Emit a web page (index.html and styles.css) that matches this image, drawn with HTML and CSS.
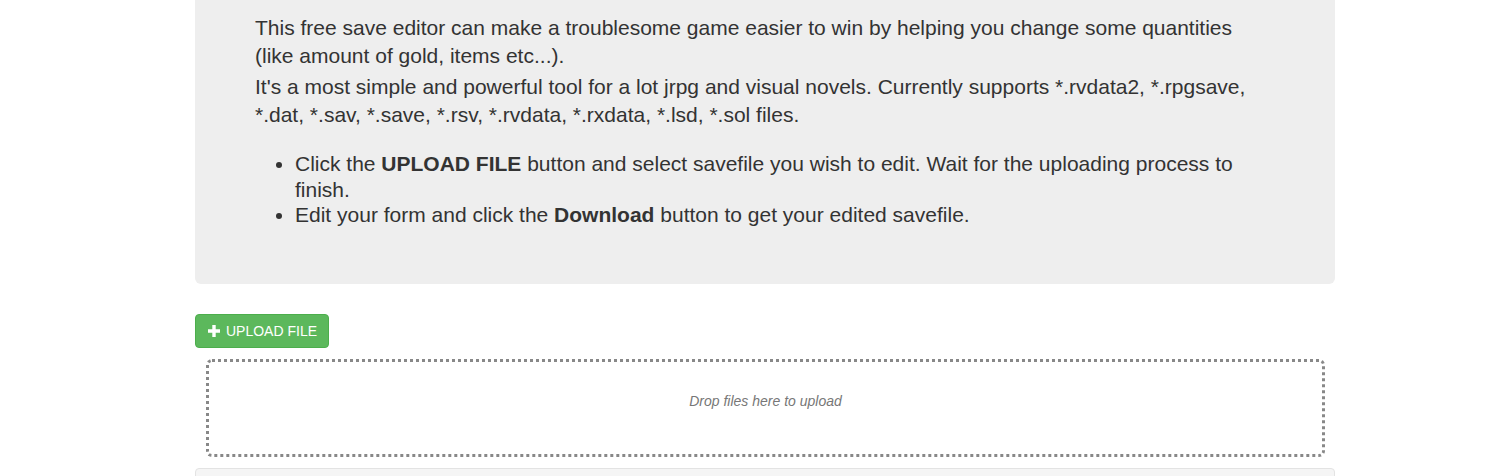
FILE: index.html
```html
<!DOCTYPE html>
<html>
<head>
<meta charset="utf-8">
<link rel="stylesheet" href="styles.css">
</head>
<body>
<div class="container">
  <div class="jumbotron">
    <p class="intro">This free save editor can make a troublesome game easier to win by helping you change some quantities (like amount of gold, items etc...).</p>
    <p class="intro">It's a most simple and powerful tool for a lot jrpg and visual novels. Currently supports *.rvdata2, *.rpgsave, *.dat, *.sav, *.save, *.rsv, *.rvdata, *.rxdata, *.lsd, *.sol files.</p>
    <ul class="steps">
      <li>Click the <b>UPLOAD FILE</b> button and select savefile you wish to edit. Wait for the uploading process to finish.</li>
      <li>Edit your form and click the <b>Download</b> button to get your edited savefile.</li>
    </ul>
  </div>
  <button class="btn-upload" type="button"><svg class="plus" width="12" height="12" viewBox="0 0 12 12"><path d="M4.3 0h3.4v4.3H12v3.4H7.7V12H4.3V7.7H0V4.3h4.3z" fill="#fff"/></svg>UPLOAD FILE</button>
  <div class="dropzone"><span>Drop files here to upload</span></div>
  <div class="well"></div>
</div>
</body>
</html>
```

FILE: styles.css
```css
html, body {
  margin: 0;
  padding: 0;
  background: #fff;
}
body {
  font-family: "Liberation Sans", Arial, sans-serif;
  color: #333;
  font-size: 14px;
}
.container {
  width: 1140px;
  margin: 0 auto;
  padding-left: 20px;
}
.jumbotron {
  background: #eee;
  border-radius: 0 0 6px 6px;
  padding: 14px 60px 46px 60px;
  margin-bottom: 30px;
}
.intro {
  font-size: 21px;
  line-height: 28px;
  margin: 0 0 3px 0;
}
.steps {
  font-size: 21px;
  line-height: 25.5px;
  margin: 22px 0 10px 0;
  padding-left: 40px;
}
.btn-upload {
  display: flex;
  align-items: center;
  gap: 6px;
  height: 34px;
  padding: 0 11px 0 12px;
  background: #5cb85c;
  border: 1px solid #4cae4c;
  border-radius: 4px;
  color: #fff;
  font-family: "Liberation Sans", Arial, sans-serif;
  font-size: 14px;
  cursor: pointer;
}
.plus {
  display: block;
}
.dropzone {
  margin: 11px 10px 11px 11px;
  height: 92px;
  padding-bottom: 0;
  border: 3px dotted #888;
  border-radius: 6px;
  display: flex;
  align-items: center;
  justify-content: center;
  box-sizing: content-box;
}
.dropzone span {
  font-style: italic;
  font-size: 14px;
  color: #777;
  margin-bottom: 14px;
}
.well {
  height: 20px;
  background: #f5f5f5;
  border: 1px solid #e3e3e3;
  border-radius: 4px;
}
```
